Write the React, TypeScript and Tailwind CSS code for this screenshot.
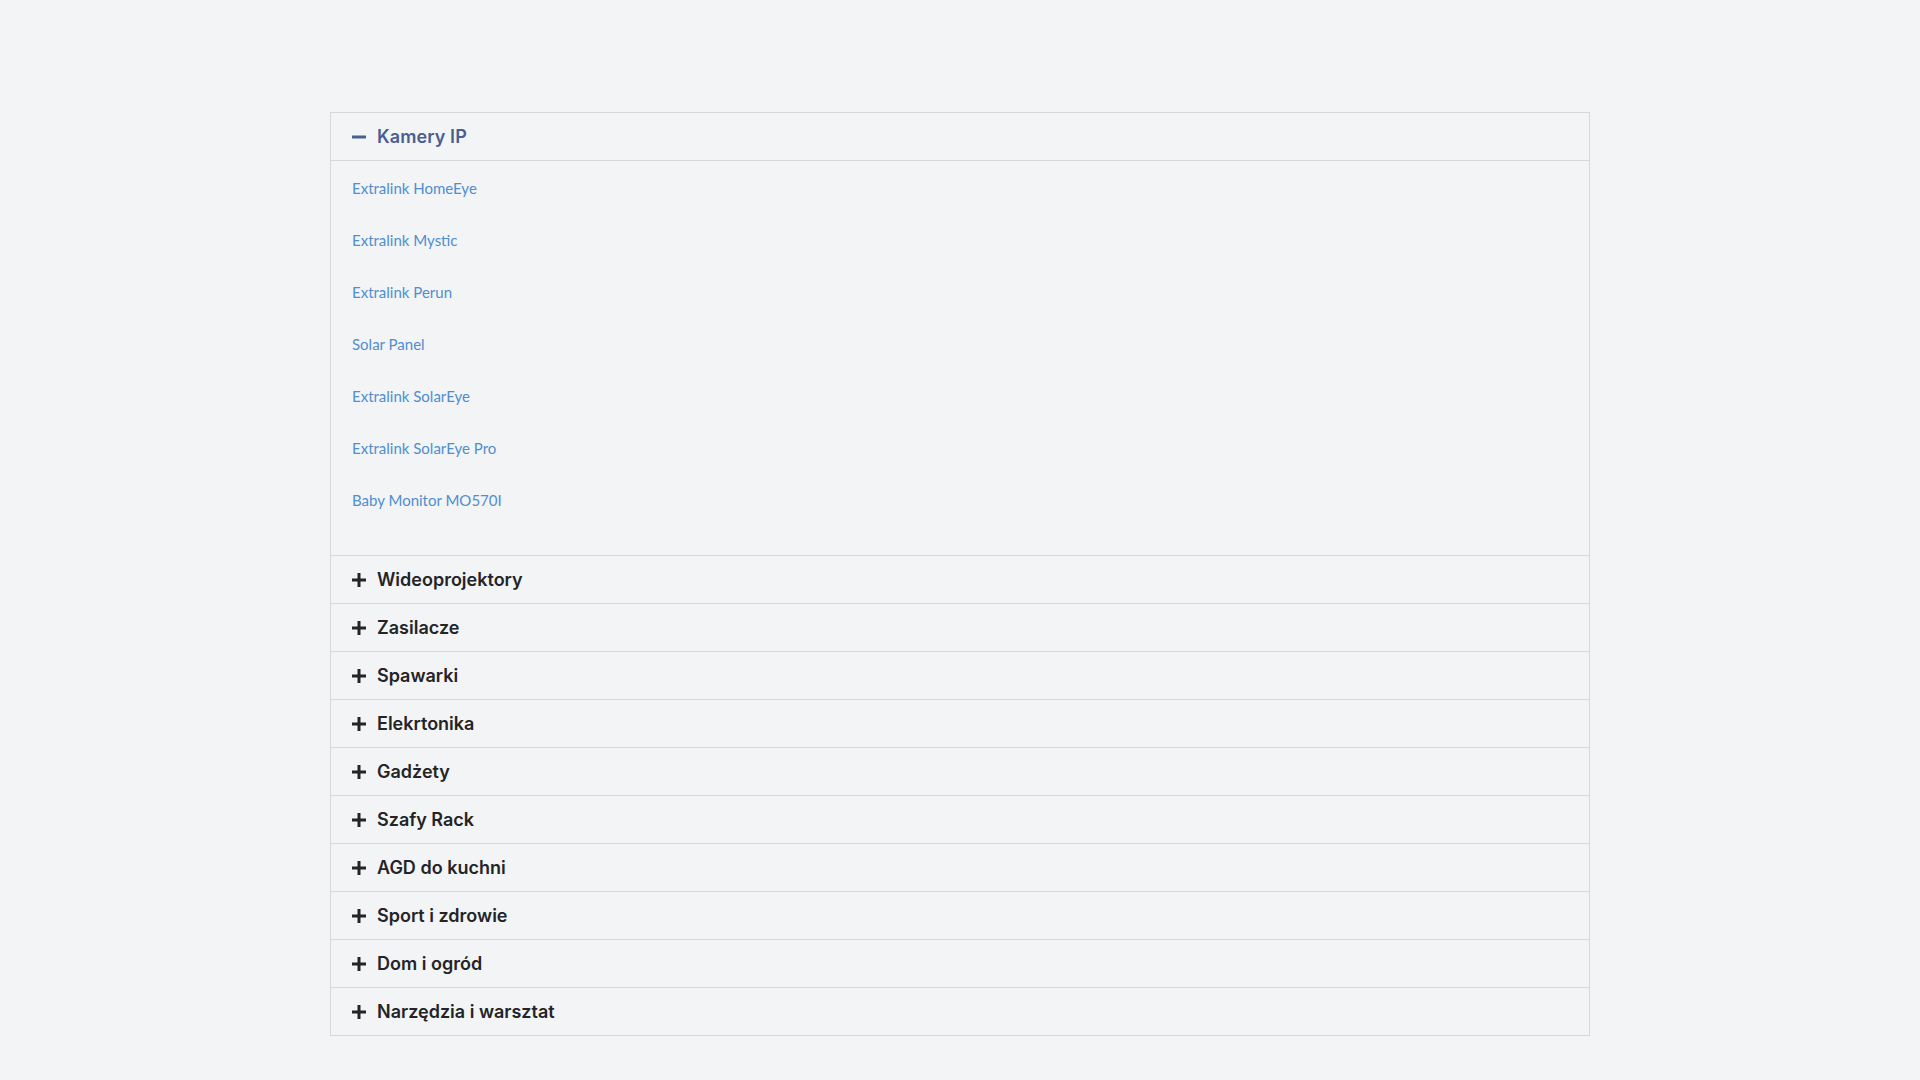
import React from "react";

const subItems = [
  "Extralink HomeEye",
  "Extralink Mystic",
  "Extralink Perun",
  "Solar Panel",
  "Extralink SolarEye",
  "Extralink SolarEye Pro",
  "Baby Monitor MO570I",
];

const categories = [
  "Wideoprojektory",
  "Zasilacze",
  "Spawarki",
  "Elekrtonika",
  "Gadżety",
  "Szafy Rack",
  "AGD do kuchni",
  "Sport i zdrowie",
  "Dom i ogród",
  "Narzędzia i warsztat",
];

function Minus() {
  return (
    <svg width="14" height="14" viewBox="0 0 14 14" className="shrink-0">
      <rect x="0" y="5.5" width="14" height="3" fill="currentColor" />
    </svg>
  );
}

function Plus() {
  return (
    <svg width="14" height="14" viewBox="0 0 14 14" className="shrink-0">
      <rect x="0" y="5.5" width="14" height="3" fill="currentColor" />
      <rect x="5.5" y="0" width="3" height="14" fill="currentColor" />
    </svg>
  );
}

export default function App() {
  return (
    <div className="min-h-screen w-full bg-[#f3f4f6] pt-[112px]">
      <div className="ml-[330px] w-[1260px] border border-[#d7d8db] bg-[#f3f4f6]">
        <div className="flex h-[47px] items-center gap-[11px] pl-[21px] text-[#4a5f8f]">
          <Minus />
          <span className="font-['Inter',sans-serif] text-[18px] font-semibold leading-none tracking-[0.1px]">
            Kamery IP
          </span>
        </div>
        <ul className="border-t border-[#d7d8db] pb-[29px] pt-px">
          {subItems.map((s) => (
            <li key={s} className="flex h-[52px] items-center pl-[21px]">
              <a className="font-['Lato',sans-serif] text-[15px] font-normal text-[#4f8ecf]">
                {s}
              </a>
            </li>
          ))}
        </ul>
        {categories.map((c) => (
          <div
            key={c}
            className="flex h-[48px] items-center gap-[11px] border-t border-[#d7d8db] pl-[21px] text-[#232427]"
          >
            <Plus />
            <span className="font-['Inter',sans-serif] text-[18px] font-semibold leading-none">
              {c}
            </span>
          </div>
        ))}
      </div>
    </div>
  );
}
